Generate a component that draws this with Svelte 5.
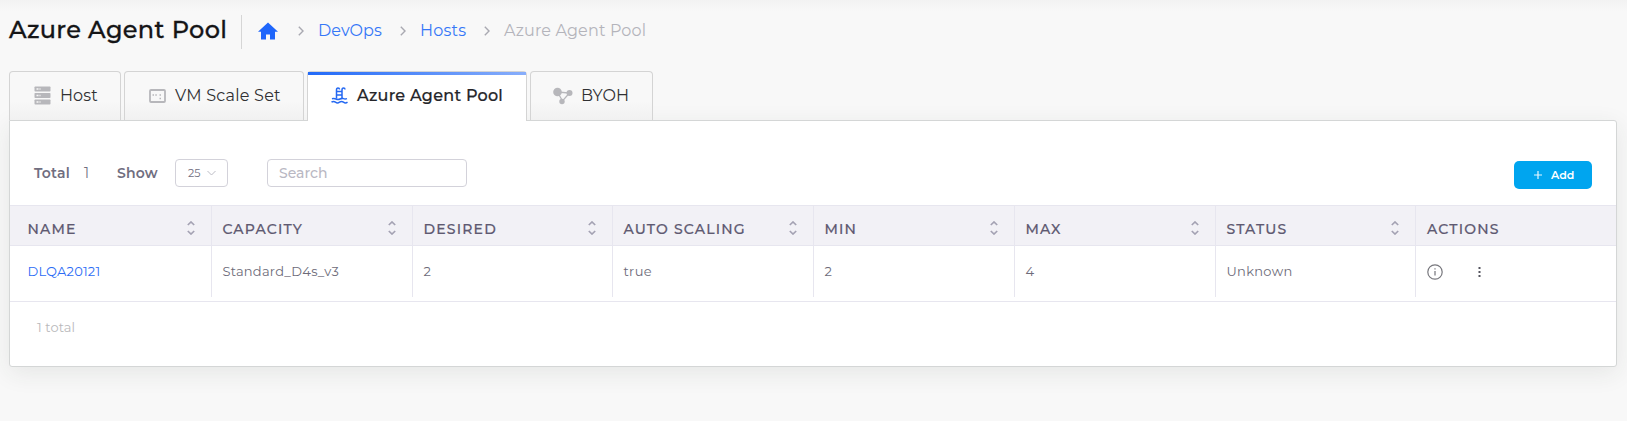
<script>
  const tabs = [
    { id: 'host', label: 'Host', width: 112, spacing: 0.1 },
    { id: 'scale', label: 'VM Scale Set', width: 180, spacing: 0.25 },
    { id: 'pool', label: 'Azure Agent Pool', width: 220, spacing: 0.27, active: true },
    { id: 'byoh', label: 'BYOH', width: 123, spacing: 0.2 }
  ];
  const columns = [
    { title: 'NAME', value: 'DLQA20121', link: true, spacing: 0.2 },
    { title: 'CAPACITY', value: 'Standard_D4s_v3', spacing: 0.25 },
    { title: 'DESIRED', value: '2', spacing: 0 },
    { title: 'AUTO SCALING', value: 'true', spacing: 0.4 },
    { title: 'MIN', value: '2', spacing: 0 },
    { title: 'MAX', value: '4', spacing: 0 },
    { title: 'STATUS', value: 'Unknown', spacing: 0.35 }
  ];
</script>

{#snippet chevron()}
  <svg class="chevron" width="6" height="10" viewBox="0 0 6 10"><path d="M.8.8 5 5 .8 9.2" fill="none" stroke="#a9a9b1" stroke-width="1.4" /></svg>
{/snippet}

<div class="page">
  <header>
    <h1>Azure Agent Pool</h1>
    <nav>
      <svg class="home" width="20" height="18" viewBox="0 0 20 18"><path d="M10 .5 0 9.8h3V17.5h5v-5h4v5h5V9.8h3z" fill="#1f66fb" /></svg>
      {@render chevron()}
      <a class="b1" href="#devops">DevOps</a>
      {@render chevron()}
      <a class="b2" href="#hosts">Hosts</a>
      {@render chevron()}
      <span class="b3">Azure Agent Pool</span>
    </nav>
  </header>

  <div class="tabs">
    {#each tabs as tab}
      <div class="tab {tab.id}" class:active={tab.active} style="width: {tab.width}px">
        {#if tab.id === 'host'}
          <svg width="17" height="19" viewBox="0 0 17 19"><g fill="#b7b7bb"><rect x=".5" y=".5" width="16" height="5" rx=".8" /><rect x=".5" y="7" width="16" height="5" rx=".8" /><rect x=".5" y="13.5" width="16" height="5" rx=".8" /></g><path d="M2.500 3h2M5.500 3h1M2.500 9.500h2M5.500 9.500h1M2.500 16h2M5.500 16h1" stroke="#f7f7f7" stroke-width="1.500" /></svg>
        {:else if tab.id === 'scale'}
          <svg width="17" height="19" viewBox="0 0 17 19"><rect x="1" y="4" width="15" height="12" rx="1" fill="none" stroke="#b7b7bb" stroke-width="1.800" /><path d="M3.500 9H5M6.300 9h1.500M10.500 9H12M10.500 12.500H12" stroke="#b7b7bb" stroke-width="1.700" /></svg>
        {:else if tab.id === 'pool'}
          <svg width="17" height="19" viewBox="0 0 17 19"><g fill="none" stroke="#2468f2" stroke-width="1.500"><path d="M5.500 12.500V4Q5.500 2 7 2T8.500 3.500M11 12.500V4Q11 2 12.500 2T14 3.500M5.500 5.500H11M5.500 9H11" /><path d="M1 12.800q2-.8 4 .2t4 0 3.500-.4 3.500 0M.5 16.200q2-1.500 4 0t4 0 4 0 4 0" /></g></svg>
        {:else}
          <svg width="20" height="19" viewBox="0 0 20 19"><path d="M4.500 6 16.500 7 9.500 15z" fill="none" stroke="#b7b7bb" stroke-width="1.300" /><g fill="#b7b7bb"><circle cx="4.500" cy="6" r="4.300" /><circle cx="16.500" cy="7" r="3" /><circle cx="9" cy="15.500" r="2.700" /></g></svg>
        {/if}
        <span style="letter-spacing: {tab.spacing}px">{tab.label}</span>
      </div>
    {/each}
  </div>

  <main>
    <div class="toolbar">
      <b class="total">Total</b><span class="count">1</span><b class="show">Show</b>
      <div class="select"><span>25</span><svg width="9" height="6" viewBox="0 0 9 6"><path d="M.5 1 4.500 5 8.500 1" fill="none" stroke="#bcbcc5" /></svg></div>
      <div class="search">Search</div>
      <button><svg width="8" height="8" viewBox="0 0 8 8"><path d="M4 0v8M0 4h8" stroke="#e6f7ff" stroke-width="1.200" /></svg><span>Add</span></button>
    </div>
    <div class="grid head">
      {#each columns as c}
        <div class="cell"><span>{c.title}</span><svg class="sort" width="8" height="14" viewBox="0 0 8 14"><path d="M.8 4 4 1 7.200 4M.8 10 4 13 7.200 10" fill="none" stroke="#a4a2b3" stroke-width="1.700" /></svg></div>
      {/each}
      <div class="cell"><span>ACTIONS</span></div>
    </div>
    <div class="grid body">
      {#each columns as c}
        <div class="cell" class:link={c.link}><span style="letter-spacing: {c.spacing}px">{c.value}</span></div>
      {/each}
      <div class="cell icons">
        <svg width="16" height="16" viewBox="0 0 16 16"><circle cx="8" cy="8" r="7.200" fill="none" stroke="#77777d" stroke-width="1.200" /><path d="M8 7v4.500M8 4.200v1.300" stroke="#88888e" stroke-width="1.400" /></svg>
        <svg width="3" height="12" viewBox="0 0 3 12"><path d="M.5 1h2v2h-2zM.5 5h2v2h-2zM.5 9h2v2h-2z" fill="#55555f" /></svg>
      </div>
    </div>
    <footer>1 total</footer>
  </main>
</div>

<style>
  :global(body) { margin: 0; background: #f8f8f8; }
  * { box-sizing: border-box; }
  .page { height: 421px; padding: 0 10px 0 9px; overflow: hidden; font-family: Montserrat, Inter, sans-serif; background: linear-gradient(#f2f2f2, #f8f8f8 12px); }
  header { display: flex; height: 71px; padding-top: 15px; }
  h1 { width: 233px; height: 34px; margin: 0; border-right: 1px solid #d6d6d6; font-size: 24px; line-height: 30px; font-weight: 500; letter-spacing: .35px; color: #151517; white-space: nowrap; -webkit-text-stroke: .3px; }
  nav { display: flex; align-items: center; height: 31px; padding-left: 16px; font-size: 16px; white-space: nowrap; }
  nav .chevron { flex: none; margin-right: 14px; }
  .home { flex: none; margin: 0 20px 0 0; }
  a { color: #3577f7; text-decoration: none; }
  .b1 { width: 82px; letter-spacing: .1px; }
  .b2 { width: 64px; letter-spacing: .2px; }
  .b3 { color: #b4b4bb; letter-spacing: .16px; }
  .tabs { display: flex; gap: 3px; height: 49px; }
  .tab { display: flex; align-items: center; height: 49px; padding: 0 0 1px 24px; border: 1px solid #d4d4d4; border-bottom: 0; border-radius: 4px 4px 0 0; font-size: 16px; color: #303033; white-space: nowrap; background: linear-gradient(#f8f8f8 60%, #f1f1f1); }
  .tab svg { flex: none; margin-right: 9px; }
  .byoh { padding-left: 22px; }
  .byoh svg { margin-right: 8px; }
  .active { position: relative; z-index: 1; height: 50px; padding: 0 0 2px 23px; font-weight: 500; color: #252529; background: #fff; -webkit-text-stroke: .2px; }
  .active::before { content: ''; position: absolute; inset: 0 0 auto; height: 3px; background: linear-gradient(90deg, #226af8, #88aefb); }
  main { height: 247px; border: 1px solid #d4d6d6; border-radius: 0 3px 3px; background: #fff; box-shadow: 0 6px 24px rgba(40, 50, 45, .09); }
  .toolbar { display: flex; align-items: center; height: 84px; padding: 20px 24px 0; font-size: 14px; color: #706e80; }
  b { font-weight: 600; letter-spacing: .2px; }
  .total { width: 50px; }
  .count { width: 33px; }
  .show { width: 58px; }
  .select { display: flex; align-items: center; justify-content: space-between; width: 53px; height: 28px; padding: 0 11px 0 12px; border: 1px solid #d3d2da; border-radius: 4px; font-size: 11px; }
  .search { width: 200px; height: 28px; margin-left: 39px; padding-left: 11px; border: 1px solid #d3d2da; border-radius: 4px; line-height: 27px; font-weight: 500; color: #b9b8c3; }
  button { display: flex; align-items: center; gap: 9px; width: 78px; height: 28px; margin: 4px 0 0 auto; padding: 0 0 0 20px; border: 0; border-radius: 5px; background: #00a5ef; color: #fff; font: 600 11px Montserrat, Inter, sans-serif; }
  .grid { display: grid; grid-template-columns: 202px 201px 200px 201px 201px 201px 200px 1fr; }
  .head { height: 41px; background: #f2f1f6; border: solid #e7e6ef; border-width: 1px 0; font-size: 14px; font-weight: 500; letter-spacing: 1.2px; color: #5e5971; -webkit-text-stroke: .2px; }
  .cell { display: flex; padding-left: 10.4px; border-right: 1px solid #e7e6ef; }
  .cell:first-child { padding-left: 17.5px; }
  .cell:last-child { padding-left: 11px; border: 0; }
  .head .cell { align-items: center; justify-content: space-between; padding-right: 16.5px; padding-top: 7px; }
  .sort { margin-top: -2px; }
  .body { height: 56px; padding-bottom: 4px; border-bottom: 1px solid #e7e6ef; font-size: 13px; color: #6d6b79; }
  .body .cell { align-items: center; }
  .body span { padding-bottom: 2px; }
  .body .link { color: #2c6cf5; }
  .icons svg:last-child { margin-left: 35px; }
  footer { padding: 17px 27px; font-size: 13px; letter-spacing: .1px; color: #b9b9bb; }
</style>
